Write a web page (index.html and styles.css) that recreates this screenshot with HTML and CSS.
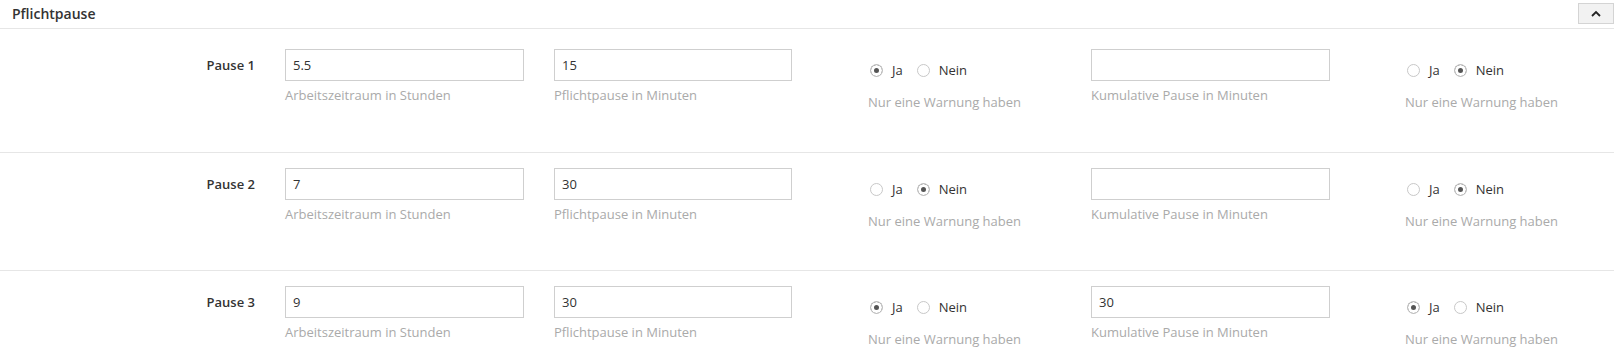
FILE: index.html
```html
<!DOCTYPE html>
<html lang="de">
<head>
    <meta charset="UTF-8">
    <meta name="viewport" content="width=device-width, initial-scale=1.0">
    <title>Pflichtpause</title>
    <link rel="stylesheet" href="styles.css">
</head>
<body>

    <div class="panel">
        <div class="panel-heading">
            <span class="panel-title">Pflichtpause</span>
            <button class="collapse-btn" type="button">
                <svg width="10" height="7" viewBox="0 0 10 7"><polyline points="1,6 5,2 9,6" fill="none" stroke="#222" stroke-width="1.8"/></svg>
            </button>
        </div>
        <div class="panel-body">

            <div class="pause-row">
                <div class="pause-label">Pause 1</div>
                <div class="field field-hours">
                    <input type="text" value="5.5">
                    <p class="help">Arbeitszeitraum in Stunden</p>
                </div>
                <div class="field field-minutes">
                    <input type="text" value="15">
                    <p class="help">Pflichtpause in Minuten</p>
                </div>
                <div class="radio-field">
                    <div class="radio-line">
                        <label><input type="radio" name="warn1" checked> Ja</label>
                        <label><input type="radio" name="warn1"> Nein</label>
                    </div>
                    <p class="help">Nur eine Warnung haben</p>
                </div>
                <div class="field field-cumulative">
                    <input type="text" value="">
                    <p class="help">Kumulative Pause in Minuten</p>
                </div>
                <div class="radio-field">
                    <div class="radio-line">
                        <label><input type="radio" name="cwarn1"> Ja</label>
                        <label><input type="radio" name="cwarn1" checked> Nein</label>
                    </div>
                    <p class="help">Nur eine Warnung haben</p>
                </div>
            </div>

            <div class="pause-row">
                <div class="pause-label">Pause 2</div>
                <div class="field field-hours">
                    <input type="text" value="7">
                    <p class="help">Arbeitszeitraum in Stunden</p>
                </div>
                <div class="field field-minutes">
                    <input type="text" value="30">
                    <p class="help">Pflichtpause in Minuten</p>
                </div>
                <div class="radio-field">
                    <div class="radio-line">
                        <label><input type="radio" name="warn2"> Ja</label>
                        <label><input type="radio" name="warn2" checked> Nein</label>
                    </div>
                    <p class="help">Nur eine Warnung haben</p>
                </div>
                <div class="field field-cumulative">
                    <input type="text" value="">
                    <p class="help">Kumulative Pause in Minuten</p>
                </div>
                <div class="radio-field">
                    <div class="radio-line">
                        <label><input type="radio" name="cwarn2"> Ja</label>
                        <label><input type="radio" name="cwarn2" checked> Nein</label>
                    </div>
                    <p class="help">Nur eine Warnung haben</p>
                </div>
            </div>

            <div class="pause-row">
                <div class="pause-label">Pause 3</div>
                <div class="field field-hours">
                    <input type="text" value="9">
                    <p class="help">Arbeitszeitraum in Stunden</p>
                </div>
                <div class="field field-minutes">
                    <input type="text" value="30">
                    <p class="help">Pflichtpause in Minuten</p>
                </div>
                <div class="radio-field">
                    <div class="radio-line">
                        <label><input type="radio" name="warn3" checked> Ja</label>
                        <label><input type="radio" name="warn3"> Nein</label>
                    </div>
                    <p class="help">Nur eine Warnung haben</p>
                </div>
                <div class="field field-cumulative">
                    <input type="text" value="30">
                    <p class="help">Kumulative Pause in Minuten</p>
                </div>
                <div class="radio-field">
                    <div class="radio-line">
                        <label><input type="radio" name="cwarn3" checked> Ja</label>
                        <label><input type="radio" name="cwarn3"> Nein</label>
                    </div>
                    <p class="help">Nur eine Warnung haben</p>
                </div>
            </div>

        </div>
    </div>

</body>
</html>
```

FILE: styles.css
```css
body {
    font-family: "Open Sans", Arial, sans-serif;
    font-size: 13px;
    color: #333;
    margin: 0;
    padding: 0;
    background-color: #fff;
}
.panel {
    width: 1614px;
}
.panel-heading {
    display: flex;
    justify-content: space-between;
    align-items: center;
    height: 28px;
    padding-left: 12px;
    border-bottom: 1px solid #e6e6e6;
}
.panel-title {
    font-size: 14px;
    font-weight: 600;
    line-height: 20px;
}
.collapse-btn {
    width: 36px;
    height: 21px;
    padding: 0;
    margin-top: -2px;
    background-color: #f2f2f2;
    border: 1px solid #d4d4d4;
    border-radius: 0;
    display: flex;
    justify-content: center;
    align-items: center;
    cursor: pointer;
}
.panel-body {
    padding-top: 5px;
}
.pause-row {
    display: grid;
    grid-template-columns: 285px 269px 314px 223px 314px 1fr;
    align-items: start;
    height: 118px;
    box-sizing: border-box;
    padding-top: 15px;
    border-bottom: 1px solid #e6e6e6;
}
.pause-row:first-child {
    height: 119px;
}
.pause-label {
    text-align: right;
    padding-right: 30px;
    line-height: 32px;
    font-weight: 600;
}
.field input {
    display: block;
    box-sizing: border-box;
    height: 32px;
    padding: 0 7px;
    font-family: inherit;
    font-size: 13px;
    color: #333;
    border: 1px solid #cfcfcf;
    border-radius: 0;
    outline: none;
}
.field-hours input {
    width: 239px;
}
.field-minutes input {
    width: 238px;
}
.field-cumulative input {
    width: 239px;
}
.help {
    margin: 5px 0 0;
    line-height: 18px;
    color: #aaa;
}
.radio-field {
    padding-top: 12px;
}
.radio-field .help {
    margin-top: 14px;
}
.radio-line {
    display: flex;
    align-items: center;
    height: 18px;
    padding-left: 2px;
}
.radio-line label {
    display: flex;
    align-items: center;
    gap: 9px;
    margin-right: 14px;
    line-height: 18px;
}
.radio-line input {
    appearance: none;
    -webkit-appearance: none;
    width: 13px;
    height: 13px;
    margin: 0;
    border: 1px solid #c8c8c8;
    border-radius: 50%;
    background-color: #fff;
}
.radio-line input:checked {
    background-color: #555;
    box-shadow: inset 0 0 0 3px #fff;
}
```
